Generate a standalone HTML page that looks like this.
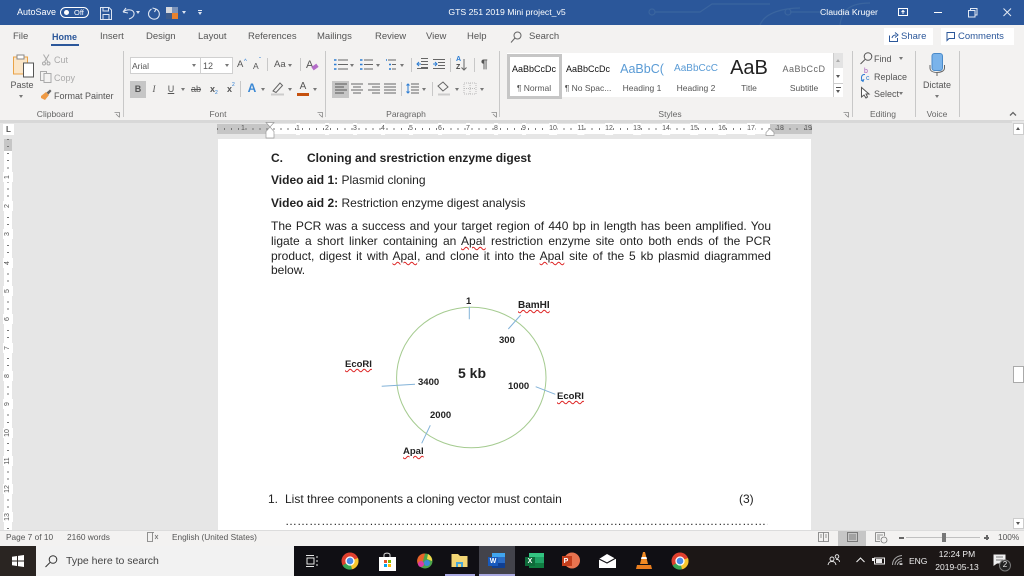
<!DOCTYPE html>
<html><head><meta charset="utf-8"><style>
html,body{margin:0;padding:0;width:1024px;height:576px;overflow:hidden;background:#e6e6e6}
body{position:relative;font-family:"Liberation Sans",sans-serif;font-size:9px;color:#555;filter:blur(.3px)}
.t{position:absolute;white-space:nowrap;line-height:12px}
.c{transform:translateX(-50%)}
.b{position:absolute}
.w{color:#fff}
.tab{font-size:9.5px;color:#555;top:31px}
.lab{top:108px;font-size:8.5px;color:#666}
.car{position:absolute;width:0;height:0;border-left:2.5px solid transparent;border-right:2.5px solid transparent;border-top:3px solid #777}
.sep{position:absolute;width:1px;background:#c8c8c8}
.rn{position:absolute;top:123px;font-size:7px;line-height:12px;color:#555;transform:translateX(-50%)}
.vn{position:absolute;left:3px;width:10px;text-align:center;font-size:7px;line-height:10px;color:#555;transform:rotate(-90deg)}
.doc{position:absolute;color:#222;font-size:12px;line-height:15px;white-space:nowrap}
.j{left:271px;width:500px;text-align:justify;text-align-last:justify;white-space:normal}
.sq{text-decoration:underline wavy #d22;text-decoration-thickness:1px;text-underline-offset:1px}
.dl{position:absolute;font-weight:bold;font-size:9.5px;line-height:12px;color:#222;white-space:nowrap}
.st{position:absolute;white-space:nowrap;line-height:12px;transform:translateX(-50%)}
svg{position:absolute;overflow:visible}
</style></head><body>

<!-- title bar -->
<div class="b" style="left:0;top:0;width:1024px;height:25px;background:#2b579a"></div>
<svg style="left:0;top:0" width="1024" height="25" fill="none" stroke="#3a659f" stroke-width="1.2">
<path d="M655 12H700L712 4H770M790 12H850M760 25C765 12 785 8 800 8"/><circle cx="652" cy="12" r="3"/><circle cx="788" cy="12" r="3"/>
<path d="M840 25C842 10 850 3 870 3"/>
</svg>
<div class="t w" style="left:17px;top:6px;font-size:9px">AutoSave</div>
<div class="b" style="left:60px;top:7px;width:27px;height:9px;border:1px solid #fff;border-radius:6px"></div>
<div class="b" style="left:64px;top:10px;width:5px;height:5px;background:#fff;border-radius:50%"></div>
<div class="t w" style="left:74px;top:7px;font-size:7.5px">Off</div>
<svg style="left:100px;top:7px" width="12" height="13" fill="none" stroke="#dde5f2" stroke-width="1"><path d="M.5.5H9L11.5 3V12.5H.5Z"/><path d="M3 .5V4H8.5V.5M3 12.5V7.5H9V12.5"/></svg>
<svg style="left:122px;top:7px" width="14" height="13" fill="none" stroke="#dde5f2" stroke-width="1.1"><path d="M1 5L4 1M1 5L6 6M1 5C5 2 11 2 12 6C12.500 9 10 11 7 12"/></svg>
<div class="car" style="left:136px;top:11px;border-top-color:#dde5f2"></div>
<svg style="left:147px;top:7px" width="14" height="13" fill="none" stroke="#dde5f2" stroke-width="1.1"><path d="M9 2C13 4 13.500 9 10 11.500C6 13.500 1.500 10.500 1.500 7C1.500 4.500 3 3 4.500 2M9 2L7.500 5M9 2L5.500 1"/></svg>
<div class="b" style="left:166px;top:7px;width:6px;height:6px;background:#d5d8de"></div>
<div class="b" style="left:172px;top:7px;width:6px;height:6px;background:#7b93ba"></div>
<div class="b" style="left:166px;top:13px;width:6px;height:6px;background:#3d5c8c"></div>
<div class="b" style="left:172px;top:13px;width:6px;height:6px;background:#e8822e"></div>
<div class="car" style="left:182px;top:11px;border-top-color:#dde5f2"></div>
<div class="b" style="left:198px;top:10px;width:4px;height:1px;background:#dde5f2"></div>
<div class="car" style="left:198px;top:12px;border-top-color:#dde5f2"></div>
<div class="t w c" style="left:507px;top:6px;font-size:8.7px">GTS 251 2019 Mini project_v5</div>
<div class="t w" style="left:820px;top:6px;font-size:8.7px">Claudia Kruger</div>
<svg style="left:898px;top:8px" width="11" height="9" fill="none" stroke="#fff"><rect x=".5" y=".5" width="9" height="7"/><path d="M5 6V3M3.500 4L5 2.500L6.500 4"/></svg>
<div class="b" style="left:934px;top:12px;width:8px;height:1px;background:#fff"></div>
<svg style="left:968px;top:8px" width="10" height="10" fill="none" stroke="#e3e9f3"><rect x=".5" y="2.500" width="6.500" height="6.500"/><path d="M2.500 2.500V.5H9V7H7"/></svg>
<svg style="left:1003px;top:8px" width="10" height="10" fill="none" stroke="#e3e9f3"><path d="M.5.5L8 8M8 .5L.5 8"/></svg>

<!-- ribbon -->
<div class="b" style="left:0;top:25px;width:1024px;height:95px;background:#f3f2f1"></div>
<div class="b" style="left:0;top:120px;width:1024px;height:3px;background:#d8d8d8"></div>
<div class="t tab" style="left:13px">File</div>
<div class="t tab" style="left:52px;color:#2b579a;font-weight:bold;font-size:9px">Home</div>
<div class="b" style="left:51px;top:44px;width:28px;height:2px;background:#2b579a"></div>
<div class="t tab" style="left:100px">Insert</div>
<div class="t tab" style="left:146px">Design</div>
<div class="t tab" style="left:198px">Layout</div>
<div class="t tab" style="left:248px">References</div>
<div class="t tab" style="left:317px">Mailings</div>
<div class="t tab" style="left:375px">Review</div>
<div class="t tab" style="left:426px">View</div>
<div class="t tab" style="left:467px">Help</div>
<svg style="left:510px;top:31px" width="12" height="13" fill="none" stroke="#666"><circle cx="7.500" cy="4.500" r="3.500"/><path d="M5 7L1 11.500"/></svg>
<div class="t tab" style="left:529px">Search</div>
<div class="b" style="left:884px;top:28px;width:49px;height:17px;background:#fff"></div>
<svg style="left:889px;top:32px" width="10" height="10" fill="none" stroke="#2b579a"><path d="M.5 3.500V9.500H8.500V6M3 6C3.500 3.500 5 3 7 3M6 .5L9 3L6 5.500"/></svg>
<div class="t" style="left:901px;top:31px;font-size:9.5px;color:#2b579a">Share</div>
<div class="b" style="left:941px;top:28px;width:73px;height:17px;background:#fff"></div>
<svg style="left:946px;top:32px" width="10" height="10" fill="none" stroke="#2b579a"><path d="M.5 .5H8.500V6.500H3L1 8.500V.5Z"/></svg>
<div class="t" style="left:958px;top:31px;font-size:9.5px;color:#2b579a">Comments</div>

<div class="sep" style="left:123px;top:51px;height:66px"></div>
<div class="sep" style="left:325px;top:51px;height:66px"></div>
<div class="sep" style="left:499px;top:51px;height:66px"></div>
<div class="sep" style="left:852px;top:51px;height:66px"></div>
<div class="sep" style="left:915px;top:51px;height:66px"></div>
<div class="sep" style="left:959px;top:51px;height:66px"></div>

<!-- clipboard -->
<svg style="left:13px;top:54px" width="22" height="24" fill="none"><rect x=".5" y="3" width="14" height="17" fill="#fbe6c8" stroke="#e9a347"/><rect x="4" y="1" width="7" height="4" fill="#fff" stroke="#888"/><rect x="10.500" y="9" width="10" height="14" fill="#fff" stroke="#555"/></svg>
<div class="t c" style="left:22px;top:79px">Paste</div>
<div class="car" style="left:19px;top:95px"></div>
<svg style="left:42px;top:54px" width="9" height="12" fill="none" stroke="#aaa"><path d="M1.500 .5L6 8M7 .5L2.500 8"/><circle cx="2" cy="9.500" r="1.500"/><circle cx="6.500" cy="9.500" r="1.500"/></svg>
<div class="t" style="left:54px;top:54px;color:#aaa">Cut</div>
<svg style="left:40px;top:71px" width="12" height="12" fill="#f3f2f1" stroke="#aaa"><rect x=".5" y=".5" width="6" height="9"/><rect x="4" y="2.500" width="7" height="9"/></svg>
<div class="t" style="left:54px;top:72px;color:#aaa">Copy</div>
<svg style="left:40px;top:89px" width="12" height="12"><path d="M1 7L6 3L9 6L5 11L1 9Z" fill="#ee9a45"/><path d="M6.500 3.500L10 .5L11.500 2L8.500 5.500" fill="#666"/></svg>
<div class="t" style="left:54px;top:90px;color:#555">Format Painter</div>
<div class="t lab c" style="left:55px">Clipboard</div>
<svg style="left:114px;top:112px" width="6" height="6" fill="none" stroke="#888" stroke-width=".8"><path d="M.5.5H5.500V5.500M2 2L5 5"/></svg>

<!-- font -->
<div class="b" style="left:130px;top:57px;width:69px;height:15px;background:#fff;border:1px solid #d0d0d0;box-sizing:content-box"></div>
<div class="t" style="left:132px;top:60px;font-size:8.5px">Arial</div>
<div class="car" style="left:192px;top:64px"></div>
<div class="b" style="left:200px;top:57px;width:31px;height:15px;background:#fff;border:1px solid #d0d0d0"></div>
<div class="t" style="left:203px;top:60px;font-size:9px">12</div>
<div class="car" style="left:225px;top:64px"></div>
<div class="t" style="left:237px;top:59px;font-size:9.5px">A</div><div class="t" style="left:244px;top:56px;font-size:6px;color:#2b7cd3">^</div>
<div class="t" style="left:253px;top:60px;font-size:8.5px">A</div><div class="t" style="left:259px;top:55px;font-size:6px;color:#2b7cd3">ˇ</div>
<div class="t" style="left:274px;top:59px;font-size:9.5px">Aa</div><div class="car" style="left:288px;top:64px"></div>
<div class="sep" style="left:267px;top:58px;height:13px"></div>
<div class="sep" style="left:300px;top:58px;height:13px"></div>
<div class="t" style="left:306px;top:59px;font-size:11px">A</div>
<div class="b" style="left:312px;top:65px;width:6px;height:4px;background:#b36cc8;transform:rotate(-35deg)"></div>
<div class="b" style="left:130px;top:81px;width:16px;height:17px;background:#c6c6c6"></div>
<div class="t c" style="left:138px;top:83px;font-size:9px;font-weight:bold">B</div>
<div class="t c" style="left:154px;top:83px;font-size:9px;font-style:italic;font-family:'Liberation Serif',serif">I</div>
<div class="t c" style="left:171px;top:83px;font-size:9px;text-decoration:underline">U</div>
<div class="car" style="left:181px;top:88px"></div>
<div class="t c" style="left:196px;top:83px;font-size:9px;text-decoration:line-through">ab</div>
<div class="t" style="left:210px;top:83px;font-size:9px;font-weight:bold">x</div><div class="t" style="left:215px;top:87px;font-size:5px;color:#2b7cd3">2</div>
<div class="t" style="left:227px;top:83px;font-size:9px;font-weight:bold">x</div><div class="t" style="left:232px;top:79px;font-size:5px;color:#2b7cd3">2</div>
<div class="sep" style="left:240px;top:81px;height:16px"></div>
<div class="t c" style="left:252px;top:82px;font-size:12px;font-weight:bold;color:#3a87d4">A</div><div class="car" style="left:261px;top:88px"></div>
<svg style="left:271px;top:81px" width="14" height="15" fill="none" stroke="#666"><path d="M2 10L9 2L11.500 4.500L5 11.500Z"/><path d="M0 13.500H13" stroke="#ccc" stroke-width="2"/></svg>
<div class="car" style="left:288px;top:88px"></div>
<div class="t c" style="left:303px;top:81px;font-size:10px">A</div>
<div class="b" style="left:297px;top:93px;width:12px;height:2.500px;background:#c5500e"></div>
<div class="car" style="left:313px;top:88px"></div>
<div class="t lab c" style="left:218px">Font</div>
<svg style="left:317px;top:112px" width="6" height="6" fill="none" stroke="#888" stroke-width=".8"><path d="M.5.5H5.500V5.500M2 2L5 5"/></svg>

<!-- paragraph -->
<div class="b" style="left:332px;top:81px;width:17px;height:17px;background:#c6c6c6"></div>
<svg style="left:333px;top:58px" width="170" height="40" fill="none" stroke="#666" stroke-width="1">
<path d="M5 2H15M5 6.500H15M5 11H15"/><path d="M1 2H3.500M1 6.500H3.500M1 11H3.500" stroke="#2b7cd3" stroke-width="1.6"/>
<path d="M31 2H40M31 6.500H40M31 11H40"/><path d="M27 2H29.500M27 6.500H29.500M27 11H29.500" stroke="#2b7cd3" stroke-width="1.6"/>
<path d="M55 2H63M59 6.500H63M59 11H63"/><path d="M53 2H54M56 6.500H58M56 11H58" stroke="#2b7cd3" stroke-width="1.6"/>
<path d="M88 1.500H95M88 4.500H95M88 7.500H95M88 10.500H95M84 11.500H95" transform="translate(0 -1)"/><path d="M88 6H84M86 4L84 6L86 8" stroke="#2b7cd3"/>
<path d="M100 1.500H112M105 4.500H112M105 7.500H112M100 10.500H112"/><path d="M100 6H104M102 4L104 6L102 8" stroke="#2b7cd3"/>
<path d="M131 1V12M128.500 9.500L131 12L133.500 9.500"/>
<path d="M2 27H14M2 30H11M2 33H14M2 36H11" transform="translate(0 -1)" stroke="#555"/>
<path d="M18 26H30M20 29H28M18 32H30M20 35H28" stroke="#666"/>
<path d="M35 26H47M39 29H47M35 32H47M39 35H47" stroke="#666"/>
<path d="M51 26H63M51 29H63M51 32H63M51 35H63" stroke="#666"/>
<path d="M78 26H86M78 29H86M78 32H86M78 35H86"/><path d="M75 26V35M73.500 27.500L75 26L76.500 27.500M73.500 33.500L75 35L76.500 33.500" stroke="#2b7cd3"/>
<path d="M110 33L105 28L110 24L115 29Z"/><path d="M105 36.500H117" stroke="#ccc" stroke-width="2"/>
<rect x="131" y="25" width="12" height="11" stroke="#bbb" stroke-dasharray="1 1"/><path d="M137 25V36M131 30.500H143" stroke="#bbb" stroke-dasharray="1 1"/>
</svg>
<div class="t" style="left:456px;top:56px;font-size:7px;line-height:7px;color:#2b7cd3;font-weight:bold">A</div>
<div class="t" style="left:456px;top:64px;font-size:7px;line-height:7px;color:#444;font-weight:bold">Z</div>
<div class="t" style="left:481px;top:58px;font-size:12px;font-weight:bold;color:#555">¶</div>
<div class="car" style="left:350px;top:64px"></div><div class="car" style="left:376px;top:64px"></div><div class="car" style="left:400px;top:64px"></div>
<div class="car" style="left:422px;top:88px"></div><div class="car" style="left:455px;top:88px"></div><div class="car" style="left:480px;top:88px"></div>
<div class="sep" style="left:411px;top:58px;height:14px"></div>
<div class="sep" style="left:450px;top:58px;height:14px"></div>
<div class="sep" style="left:474px;top:58px;height:14px"></div>
<div class="sep" style="left:401px;top:82px;height:14px"></div>
<div class="sep" style="left:432px;top:82px;height:14px"></div>
<div class="t lab c" style="left:406px">Paragraph</div>
<svg style="left:491px;top:112px" width="6" height="6" fill="none" stroke="#888" stroke-width=".8"><path d="M.5.5H5.500V5.500M2 2L5 5"/></svg>

<!-- styles -->
<div class="b" style="left:507px;top:53px;width:336px;height:44px;background:#fff"></div>
<div class="b" style="left:507px;top:54px;width:49px;height:39px;border:3px solid #c6c6c6"></div>
<div class="st" style="left:534px;top:63px;font-size:9px;color:#111">AaBbCcDc</div>
<div class="st" style="left:534px;top:82px;font-size:8.5px">¶ Normal</div>
<div class="st" style="left:588px;top:63px;font-size:9px;color:#111">AaBbCcDc</div>
<div class="st" style="left:588px;top:82px;font-size:8.5px">¶ No Spac...</div>
<div class="st" style="left:642px;top:63px;font-size:12.5px;color:#5a9bd5">AaBbC(</div>
<div class="st" style="left:642px;top:82px;font-size:8.5px">Heading 1</div>
<div class="st" style="left:696px;top:63px;font-size:10px;color:#5a9bd5">AaBbCcC</div>
<div class="st" style="left:696px;top:82px;font-size:8.5px">Heading 2</div>
<div class="st" style="left:749px;top:62px;font-size:20px;color:#222">AaB</div>
<div class="st" style="left:749px;top:82px;font-size:8.5px">Title</div>
<div class="st" style="left:804px;top:63px;font-size:9px;letter-spacing:.5px;color:#666">AaBbCcD</div>
<div class="st" style="left:804px;top:82px;font-size:8.5px">Subtitle</div>
<div class="b" style="left:833px;top:53px;width:10px;height:44px;background:#fff;border-left:1px solid #ccc;box-sizing:border-box"></div>
<div class="b" style="left:834px;top:53px;width:9px;height:15px;background:#e3e3e3"></div>
<div class="b" style="left:834px;top:83px;width:9px;height:1px;background:#ccc"></div>
<div class="car" style="left:836px;top:59px;border-top:none;border-bottom:3px solid #aaa"></div>
<div class="car" style="left:836px;top:75px;border-top-color:#555"></div>
<div class="car" style="left:836px;top:90px;border-top-color:#555"></div>
<div class="b" style="left:836px;top:87px;width:5px;height:1px;background:#555"></div>
<div class="t lab c" style="left:670px">Styles</div>
<svg style="left:843px;top:112px" width="6" height="6" fill="none" stroke="#888" stroke-width=".8"><path d="M.5.5H5.500V5.500M2 2L5 5"/></svg>

<!-- editing / voice -->
<svg style="left:860px;top:52px" width="13" height="13" fill="none" stroke="#555"><circle cx="8" cy="4.500" r="3.800"/><path d="M5 7.500L.5 12"/></svg>
<div class="t" style="left:874px;top:53px">Find</div><div class="car" style="left:899px;top:57px"></div>
<div class="t" style="left:864px;top:68px;font-size:7px;color:#a75bb8;line-height:8px">b</div>
<div class="t" style="left:866px;top:75px;font-size:7px;color:#2b7cd3;line-height:8px">c</div>
<svg style="left:860px;top:73px" width="7" height="10" fill="none" stroke="#2b7cd3"><path d="M5 1.500C1 1 .5 6 3 8M1 7L3 8.500L4 6"/></svg>
<div class="t" style="left:874px;top:71px">Replace</div>
<svg style="left:861px;top:87px" width="9" height="12" fill="#fff" stroke="#555"><path d="M.5.5V10L3 8L5 11L6.500 10L5 7H8Z"/></svg>
<div class="t" style="left:874px;top:88px">Select</div><div class="car" style="left:899px;top:92px"></div>
<div class="t lab c" style="left:883px">Editing</div>
<svg style="left:929px;top:53px" width="17" height="24" fill="none"><rect x="3" y=".5" width="10.500" height="17" rx="2.500" fill="#7ab3ea" stroke="#4a8ac9"/><path d="M1 12V15C1 18 4 19.500 8 19.500C12 19.500 15.500 18 15.500 15V12M8 19.500V23" stroke="#666"/></svg>
<div class="t c" style="left:937px;top:79px">Dictate</div>
<div class="car" style="left:935px;top:95px"></div>
<div class="t lab c" style="left:937px">Voice</div>
<svg style="left:1009px;top:111px" width="8" height="6" fill="none" stroke="#666" stroke-width="1.300"><path d="M1 4.500L4 1.500L7 4.500"/></svg>

<!-- rulers -->
<div class="b" style="left:3px;top:124px;width:11px;height:11px;background:#fff"></div>
<div class="t" style="left:6px;top:124px;font-size:8px;font-weight:bold;color:#555">L</div>
<div class="b" style="left:217px;top:124px;width:595px;height:10px;background:#fff"></div>
<div class="b" style="left:217px;top:124px;width:53px;height:10px;background:#c6c6c6"></div>
<div class="b" style="left:770px;top:124px;width:42px;height:10px;background:#c6c6c6"></div>
<div class="b" style="left:217px;top:128px;width:595px;height:2px;background:repeating-linear-gradient(90deg,#777 0 1px,transparent 1px 7.070px)"></div>
<svg style="left:265px;top:122px" width="10" height="17"><path d="M1 .5H9L5 5L9 9.500V16H1V9.500L5 5Z" fill="#fff" stroke="#999" stroke-width=".7"/></svg>
<svg style="left:765px;top:128px" width="10" height="8"><path d="M5 .5L9 4.500V7.500H1V4.500Z" fill="#fff" stroke="#999" stroke-width=".7"/></svg>
<div class="rn" style="left:243px">1</div><div class="rn" style="left:298px;background:#fff">1</div><div class="rn" style="left:327px;background:#fff">2</div><div class="rn" style="left:355px;background:#fff">3</div><div class="rn" style="left:383px;background:#fff">4</div><div class="rn" style="left:411px;background:#fff">5</div><div class="rn" style="left:440px;background:#fff">6</div><div class="rn" style="left:468px;background:#fff">7</div><div class="rn" style="left:496px;background:#fff">8</div><div class="rn" style="left:524px;background:#fff">9</div><div class="rn" style="left:553px;background:#fff">10</div><div class="rn" style="left:581px;background:#fff">11</div><div class="rn" style="left:609px;background:#fff">12</div><div class="rn" style="left:637px;background:#fff">13</div><div class="rn" style="left:666px;background:#fff">14</div><div class="rn" style="left:694px;background:#fff">15</div><div class="rn" style="left:722px;background:#fff">16</div><div class="rn" style="left:751px;background:#fff">17</div><div class="rn" style="left:780px">18</div><div class="rn" style="left:808px">19</div>

<div class="b" style="left:4px;top:139px;width:8px;height:391px;background:#fff"></div>
<div class="b" style="left:4px;top:139px;width:8px;height:12px;background:#c6c6c6"></div>
<div class="b" style="left:7px;top:139px;width:2px;height:391px;background:repeating-linear-gradient(180deg,#777 0 1px,transparent 1px 7.070px)"></div>
<div class="vn" style="top:172px;background:#fff">1</div><div class="vn" style="top:201px;background:#fff">2</div><div class="vn" style="top:229px;background:#fff">3</div><div class="vn" style="top:258px;background:#fff">4</div><div class="vn" style="top:286px;background:#fff">5</div><div class="vn" style="top:314px;background:#fff">6</div><div class="vn" style="top:343px;background:#fff">7</div><div class="vn" style="top:371px;background:#fff">8</div><div class="vn" style="top:399px;background:#fff">9</div><div class="vn" style="top:428px;background:#fff">10</div><div class="vn" style="top:456px;background:#fff">11</div><div class="vn" style="top:484px;background:#fff">12</div><div class="vn" style="top:512px;background:#fff">13</div>

<!-- scrollbar -->
<div class="b" style="left:1012px;top:121px;width:12px;height:409px;background:#e6e6e6"></div>
<div class="b" style="left:1013px;top:123px;width:11px;height:12px;background:#fff;border:1px solid #ccc;box-sizing:border-box"></div>
<div class="car" style="left:1016px;top:127px;border-top:none;border-bottom:3px solid #555"></div>
<div class="b" style="left:1013px;top:366px;width:11px;height:17px;background:#fff;border:1px solid #aaa;box-sizing:border-box"></div>
<div class="b" style="left:1013px;top:518px;width:11px;height:11px;background:#fff;border:1px solid #ccc;box-sizing:border-box"></div>
<div class="car" style="left:1016px;top:522px;border-top-color:#555"></div>

<!-- page -->
<div class="b" style="left:218px;top:139px;width:593px;height:391px;background:#fff"></div>
<div class="doc" style="left:271px;top:151px;font-weight:bold">C.</div>
<div class="doc" style="left:307px;top:151px;font-weight:bold">Cloning and srestriction enzyme digest</div>
<div class="doc" style="left:271px;top:173px"><b>Video aid 1:</b> Plasmid cloning</div>
<div class="doc" style="left:271px;top:196px"><b>Video aid 2:</b> Restriction enzyme digest analysis</div>
<div class="doc j" style="top:219px">The PCR was a success and your target region of 440 bp in length has been amplified. You</div>
<div class="doc j" style="top:234px">ligate a short linker containing an <span class="sq">ApaI</span> restriction enzyme site onto both ends of the PCR</div>
<div class="doc j" style="top:249px">product, digest it with <span class="sq">ApaI</span>, and clone it into the <span class="sq">ApaI</span> site of the 5 kb plasmid diagrammed</div>
<div class="doc" style="left:271px;top:263px">below.</div>

<svg style="left:0;top:0" width="1024" height="576" fill="none">
<ellipse cx="471.300" cy="377.500" rx="74.700" ry="70.300" stroke="#a5cb90" stroke-width="1"/>
<g stroke="#82b2d8" stroke-width="1"><path d="M469.300 306.700V319.300M520.700 315L508.300 329M381.700 386.300L415 384.300M535.700 386.700L555.300 394.300M430.300 425.300L421.700 443.300"/></g>
</svg>
<div class="dl" style="left:466px;top:296px">1</div>
<div class="dl" style="left:518px;top:300px;font-size:10px"><span class="sq">BamHI</span></div>
<div class="dl" style="left:499px;top:335px">300</div>
<div class="dl" style="left:345px;top:359px"><span class="sq">EcoRI</span></div>
<div class="dl" style="left:458px;top:366px;font-size:14px;line-height:14px">5 kb</div>
<div class="dl" style="left:418px;top:377px">3400</div>
<div class="dl" style="left:508px;top:381px">1000</div>
<div class="dl" style="left:557px;top:391px"><span class="sq">EcoRI</span></div>
<div class="dl" style="left:430px;top:410px">2000</div>
<div class="dl" style="left:403px;top:446px"><span class="sq">ApaI</span></div>

<div class="doc" style="left:268px;top:492px">1.</div>
<div class="doc" style="left:285px;top:492px">List three components a cloning vector must contain</div>
<div class="doc" style="left:739px;top:492px">(3)</div>
<div class="doc" style="left:285px;top:514px;width:483px;overflow:hidden;letter-spacing:.03px">……………………………………………………………………………………………………………………………………………………</div>

<!-- status bar -->
<div class="b" style="left:0;top:530px;width:1024px;height:16px;background:#f3f2f1;border-top:1px solid #dcdcdc;box-sizing:border-box"></div>
<div class="t" style="left:6px;top:531px;font-size:8.3px">Page 7 of 10</div>
<div class="t" style="left:67px;top:531px;font-size:8.3px">2160 words</div>
<svg style="left:147px;top:532px" width="12" height="11" fill="none" stroke="#777" stroke-width=".8"><path d="M.5 .5H5.500V9.500H.5ZM5.500 .5H7M8 3L11 7M11 3L8 7"/></svg>
<div class="t" style="left:172px;top:531px;font-size:8.3px">English (United States)</div>
<svg style="left:818px;top:532px" width="12" height="11" fill="none" stroke="#777" stroke-width=".8"><path d="M.5 .5H5.500V9.500H.5ZM5.500 .5H10.500V9.500H5.500ZM2 3H4M2 5H4M7 3H9M7 5H9"/></svg>
<div class="b" style="left:838px;top:531px;width:28px;height:15px;background:#c6c6c6"></div>
<svg style="left:847px;top:532px" width="11" height="11" fill="none" stroke="#666" stroke-width=".8"><rect x=".5" y=".5" width="10" height="9"/><path d="M2 3H9M2 5H9M2 7H9"/></svg>
<svg style="left:875px;top:532px" width="13" height="12" fill="none" stroke="#777" stroke-width=".8"><path d="M.5 .5H9.500V4M.5 .5V9.500H5M2 3H8M2 5H5M2 7H5"/><circle cx="9" cy="8" r="3"/></svg>
<div class="b" style="left:899px;top:537px;width:5px;height:1.500px;background:#666"></div>
<div class="b" style="left:906px;top:537px;width:74px;height:1px;background:#c0c0c0"></div>
<div class="b" style="left:942px;top:533px;width:4px;height:9px;background:#777"></div>
<div class="b" style="left:984px;top:537px;width:5px;height:1.500px;background:#666"></div>
<div class="b" style="left:986px;top:535px;width:1.500px;height:5px;background:#666"></div>
<div class="t" style="left:998px;top:531px;font-size:8.3px">100%</div>

<!-- taskbar -->
<div class="b" style="left:0;top:546px;width:1024px;height:30px;background:#100f14"></div>
<div class="b" style="left:680px;top:546px;width:344px;height:30px;background:#1c1716"></div>
<div class="b" style="left:0;top:546px;width:36px;height:30px;background:#2a2522"></div>
<svg style="left:12px;top:555px" width="12" height="12" fill="#fff"><path d="M0 1.800L5 1V5.500H0ZM6 .9L12 0V5.500H6ZM0 6.500H5V11L0 10.200ZM6 6.500H12V12L6 11.100Z"/></svg>
<div class="b" style="left:36px;top:546px;width:258px;height:30px;background:#f2f2f2"></div>
<svg style="left:45px;top:555px" width="13" height="13" fill="none" stroke="#333" stroke-width="1"><circle cx="8" cy="4.500" r="3.800"/><path d="M5 7.500L.5 12"/></svg>
<div class="t" style="left:66px;top:555px;font-size:10.500px;color:#444">Type here to search</div>
<svg style="left:306px;top:555px" width="12" height="13" fill="none" stroke="#e5e5e5"><path d="M0 .5H8M0 11.500H8"/><rect x="1" y="3" width="7" height="6"/><path d="M11 1V3M11 5V7M11 9V11"/></svg>

<!-- taskbar apps -->
<svg style="left:340px;top:552px" width="20" height="20"><circle cx="10" cy="9" r="8.500" fill="#e0402f"/><path d="M10 9L2.600 13.500A8.500 8.500 0 0 0 12 17.300Z" fill="#3aa655"/><path d="M10 9L18 6A8.500 8.500 0 0 1 12 17.300Z" fill="#f7c72f"/><circle cx="10" cy="9" r="4" fill="#4a8be8" stroke="#fff" stroke-width="1.300"/></svg>
<svg style="left:378px;top:552px" width="20" height="20"><rect x="1" y="5" width="17" height="14" fill="#fff"/><path d="M6 5V3C6 .5 12 .5 12 3V5" fill="none" stroke="#ddd"/><rect x="6" y="8" width="3" height="3" fill="#e8542a"/><rect x="10" y="8" width="3" height="3" fill="#7fba00"/><rect x="6" y="12" width="3" height="3" fill="#00a4ef"/><rect x="10" y="12" width="3" height="3" fill="#ffb900"/></svg>
<svg style="left:416px;top:552px" width="20" height="20"><circle cx="9" cy="9" r="7.500" fill="#4ca34a"/><path d="M9 1.500A7.500 7.500 0 0 0 3 14L7 9Z" fill="#e8642a"/><path d="M12 2A7 7 0 0 1 16 9L11 7Z" fill="#f5d84a"/><circle cx="5" cy="12" r="3" fill="#d93ba5"/><circle cx="11" cy="11" r="3" fill="#3b8ad9"/></svg>
<div class="b" style="left:445px;top:574px;width:30px;height:2px;background:#a8a8e0"></div>
<svg style="left:451px;top:553px" width="18" height="16"><path d="M.5 1H7L9 3H16.500V14H.5Z" fill="#f3d675"/><path d="M5 9H12V14H10V11H7V14H5Z" fill="#4aa7d8"/></svg>
<div class="b" style="left:479px;top:546px;width:36px;height:30px;background:#43434b"></div>
<div class="b" style="left:479px;top:574px;width:36px;height:2px;background:#a8a8e0"></div>
<svg style="left:487px;top:552px" width="20" height="18"><path d="M5 1H18V16H5Z" fill="#2b6cc4"/><path d="M5 1H18V5H5Z" fill="#41a5ee"/><path d="M5 11H18V16H5Z" fill="#103f91"/><rect x="1" y="5" width="10" height="9" fill="#185abd"/></svg>
<div class="t c" style="left:493px;top:556px;font-size:7px;font-weight:bold;color:#fff">W</div>
<svg style="left:524px;top:552px" width="20" height="18"><path d="M5 1H20V16H5Z" fill="#21a366"/><path d="M5 1H20V5H5Z" fill="#33c481"/><path d="M5 11H20V16H5Z" fill="#107c41"/><rect x="1" y="5" width="10" height="9" fill="#0f6b3a"/></svg>
<div class="t c" style="left:530px;top:556px;font-size:7px;font-weight:bold;color:#fff">X</div>
<svg style="left:561px;top:552px" width="20" height="18"><circle cx="11" cy="8.500" r="8" fill="#e8734f"/><rect x="1" y="4" width="10" height="10" fill="#c43e1c"/></svg>
<div class="t c" style="left:566px;top:556px;font-size:7px;font-weight:bold;color:#fff">P</div>
<svg style="left:598px;top:553px" width="20" height="16"><path d="M1 6L9 1L18 6V15H1Z" fill="#fff"/><path d="M1 6L9 10L18 5" fill="none" stroke="#100f14" stroke-width="1.200"/></svg>
<svg style="left:635px;top:551px" width="18" height="20"><path d="M8 1H10L13 13H5Z" fill="#f08a24"/><path d="M6.500 6H11.500L12 8H6Z" fill="#fff"/><path d="M2 14H16L17 18H1Z" fill="#e87d1e"/></svg>
<svg style="left:670px;top:552px" width="20" height="20"><circle cx="10" cy="9" r="8.500" fill="#e0402f"/><path d="M10 9L2.600 13.500A8.500 8.500 0 0 0 12 17.300Z" fill="#3aa655"/><path d="M10 9L18 6A8.500 8.500 0 0 1 12 17.300Z" fill="#f7c72f"/><circle cx="10" cy="9" r="4" fill="#4a8be8" stroke="#fff" stroke-width="1.300"/></svg>

<!-- tray -->
<svg style="left:827px;top:554px" width="13" height="12" fill="none" stroke="#eee" stroke-width=".9"><circle cx="5" cy="5" r="2"/><path d="M1 11C1.500 8 3 7.500 5 7.500C7 7.500 8.500 8 9 11"/><circle cx="10" cy="2.500" r="1.800"/><path d="M9 5.500C11 5 12.500 6 12.500 8"/></svg>
<svg style="left:856px;top:557px" width="9" height="6" fill="none" stroke="#eee" stroke-width="1.100"><path d="M.5 5L4.500 1L8.500 5"/></svg>
<svg style="left:872px;top:555px" width="13" height="11" fill="#eee"><rect x="2.500" y="3" width="10" height="6" fill="none" stroke="#eee"/><rect x="4" y="4" width="6" height="4"/><path d="M3 0V3M1 1V3"/><rect x="0" y="3" width="3" height="3"/></svg>
<svg style="left:892px;top:555px" width="11" height="11" fill="none" stroke="#aaa"><path d="M.5 10C.5 5 4 1 10 .5M3 10C3 7 6 3.500 10 3.500M5.500 10C5.500 8 7.500 6 10 6"/><path d="M8 10V8.500H10V10" fill="#eee"/></svg>
<div class="t" style="left:909px;top:555px;font-size:8.500px;color:#eee">ENG</div>
<div class="t c" style="left:957px;top:548px;font-size:8.500px;color:#eee">12:24 PM</div>
<div class="t c" style="left:957px;top:561px;font-size:8.500px;color:#eee">2019-05-13</div>
<svg style="left:993px;top:554px" width="19" height="18"><path d="M.5 .5H12.500V9.500H4L.5 12Z" fill="#eee"/><path d="M3 3H10M3 6H10" stroke="#555" stroke-width=".8"/><circle cx="12" cy="11.500" r="5.500" fill="#222" stroke="#777"/></svg>
<div class="t c" style="left:1005px;top:559px;font-size:8px;color:#eee">2</div>
</body></html>
